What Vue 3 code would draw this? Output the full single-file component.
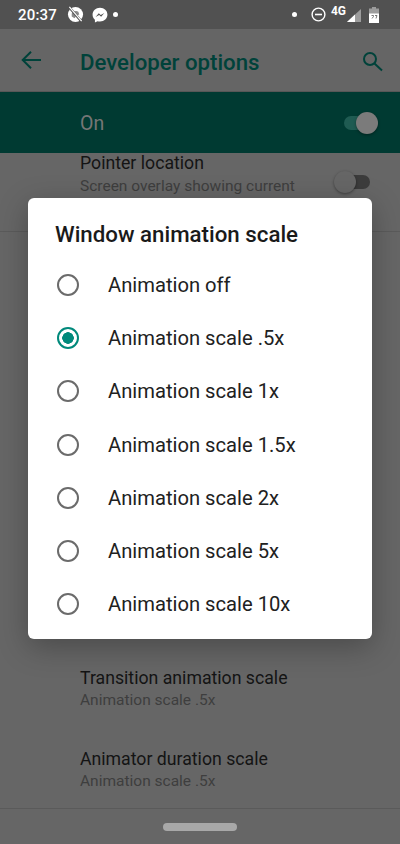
<script setup>
const options = ['Animation off', 'Animation scale .5x', 'Animation scale 1x', 'Animation scale 1.5x', 'Animation scale 2x', 'Animation scale 5x', 'Animation scale 10x']
const selected = 1
</script>

<template>
  <div class="screen">
    <div class="status">
      <div class="status-side">
        <span class="time">20:37</span>
        <svg class="ic" width="17" height="17" viewBox="0 0 18 18">
          <circle cx="9" cy="9" r="8" fill="#fff" />
          <path d="M5 8c2-3 5-3 7-2l1 3-3 1-2 3-3-2z" fill="#8a8a8a" />
          <path d="M2.500 1.500l13 15" stroke="#515151" stroke-width="2.600" />
          <path d="M2.500 1l13 15" stroke="#fff" stroke-width="1.300" />
        </svg>
        <svg class="ic msg" width="16" height="16" viewBox="0 0 17 17">
          <path d="M8.500.8C4 .8.600 4.100.600 8.200c0 2.200 1 4.100 2.500 5.400v3l2.800-1.500c.8.200 1.700.3 2.600.3 4.500 0 7.900-3.300 7.900-7.400S13 .8 8.500.8z" fill="#fff" />
          <path d="M3.800 10.600l3.400-4 2.100 2 3.800-2.200-3.400 4-2.100-2z" fill="#515151" />
        </svg>
        <span class="dot"></span>
      </div>
      <div class="status-side">
        <span class="dot right-dot"></span>
        <svg class="ic" width="15" height="15" viewBox="0 0 15 15">
          <circle cx="7.500" cy="7.500" r="6.400" fill="none" stroke="#fff" stroke-width="1.400" />
          <path d="M4 7.500h7" stroke="#fff" stroke-width="1.600" />
        </svg>
        <span class="net">4G</span>
        <svg class="signal" width="14" height="13" viewBox="0 0 14 13">
          <path d="M14 0v13H0z" fill="#9c9c9c" />
          <path d="M8 5.600V13H0z" fill="#fff" />
        </svg>
        <svg class="battery" width="10" height="16" viewBox="0 0 10 16">
          <path d="M3 0h4v1.500h3V16H0V1.500h3z" fill="#9c9c9c" />
          <path d="M0 6.500h10V16H0z" fill="#fff" />
          <path d="M2.500 8.500h2v1l-1.500 2M6 8.500h2l-1 3" stroke="#555" stroke-width=".8" fill="none" />
        </svg>
      </div>
    </div>

    <div class="toolbar">
      <svg class="back" width="24" height="24" viewBox="0 0 24 24">
        <path d="M21 12H3.500M11 3.700L2.700 12l8.300 8.300" fill="none" stroke="#00423a" stroke-width="2" />
      </svg>
      <span class="page-title">Developer options</span>
      <svg class="search" width="24" height="24" viewBox="0 0 24 24">
        <circle cx="9" cy="11" r="6" fill="none" stroke="#00423a" stroke-width="2" />
        <path d="M13.500 15.500L21 22.500" stroke="#00423a" stroke-width="2" />
      </svg>
    </div>

    <div class="master">
      <span class="master-label">On</span>
      <span class="switch on"><span class="thumb"></span></span>
    </div>

    <div class="list">
      <div class="row clipped">
        <div class="row-text">
          <div class="row-title">Pointer location</div>
          <div class="row-sub">Screen overlay showing current<br />touch data</div>
        </div>
        <span class="switch off"><span class="thumb"></span></span>
      </div>
      <div class="spacer"></div>
      <div class="row plain">
        <div class="row-title">Transition animation scale</div>
        <div class="row-sub">Animation scale .5x</div>
      </div>
      <div class="row plain">
        <div class="row-title">Animator duration scale</div>
        <div class="row-sub">Animation scale .5x</div>
      </div>
    </div>

    <div class="nav"><span class="pill"></span></div>

    <div class="dialog">
      <div class="dialog-title">Window animation scale</div>
      <div class="options">
        <div v-for="(option, i) in options" :key="option" class="option">
          <span class="radio" :class="{ checked: i === selected }"></span>
          <span class="option-label">{{ option }}</span>
        </div>
      </div>
    </div>
  </div>
</template>

<style scoped>
.screen {
  position: relative;
  width: 400px;
  height: 844px;
  overflow: hidden;
  display: flex;
  flex-direction: column;
  background: #666;
  font-family: Roboto, "Liberation Sans", sans-serif;
}
.status {
  height: 29px;
  flex: none;
  background: #515151;
  display: flex;
  justify-content: space-between;
  align-items: center;
  padding: 0 21px 0 18px;
  color: #fff;
}
.status-side {
  display: flex;
  align-items: center;
}
.time {
  font-size: 15px;
  font-weight: 500;
  letter-spacing: .2px;
  margin-right: 10px;
}
.msg {
  margin-left: 8px;
}
.dot {
  width: 5px;
  height: 5px;
  border-radius: 50%;
  background: #fff;
  margin-left: 5px;
}
.dot.right-dot {
  margin: 0 14px 0 0;
}
.net {
  font-size: 12px;
  font-weight: 700;
  margin: -7px 1px 0 5px;
}
.signal {
  margin-top: 2px;
}
.battery {
  margin-left: 8px;
}
.toolbar {
  height: 62px;
  flex: none;
  display: flex;
  align-items: center;
  padding: 0 15px 0 20px;
  background: #656565;
  border-bottom: 1px solid #575757;
}
.page-title {
  flex: 1;
  margin: 3px 0 0 36px;
  font-size: 22.200px;
  font-weight: 500;
  color: #00423a;
}
.master {
  height: 61px;
  flex: none;
  display: flex;
  align-items: center;
  justify-content: space-between;
  padding: 0 24px 0 80px;
  background: #003a32;
}
.master-label {
  font-size: 19.500px;
  margin-top: 2px;
  color: #767676;
}
.switch {
  position: relative;
  display: block;
  width: 32px;
  height: 14px;
  border-radius: 7px;
}
.switch.on {
  background: #1f5b52;
}
.switch.off {
  background: #3c3c3c;
}
.thumb {
  position: absolute;
  top: -4px;
  width: 22px;
  height: 22px;
  border-radius: 50%;
  box-shadow: 0 1px 3px rgba(0, 0, 0, .4);
}
.on .thumb {
  right: -2px;
  background: #7b7b7b;
}
.off .thumb {
  left: -4px;
  background: #666;
}
.list {
  flex: 1;
  display: flex;
  flex-direction: column;
}
.row {
  padding-left: 80px;
}
.clipped {
  height: 78px;
  flex: none;
  display: flex;
  justify-content: space-between;
  padding-right: 30px;
  border-bottom: 1px solid #5b5b5b;
  overflow: hidden;
}
.clipped .switch {
  margin-top: 22px;
}
.clipped .row-title {
  margin-top: 0;
}
.clipped .row-sub {
  margin-top: 3px;
}
.row-title {
  font-size: 17.700px;
  line-height: 20px;
  color: #141414;
  margin-top: -1px;
}
.row-sub {
  font-size: 15.500px;
  line-height: 20px;
  margin-top: 2px;
  color: #3e3e3e;
}
.spacer {
  flex: 1;
}
.plain {
  height: 81px;
  flex: none;
}
.plain:last-child {
  height: 58px;
}
.nav {
  height: 35px;
  flex: none;
  display: flex;
  justify-content: center;
  align-items: center;
  border-top: 1px solid #5a5a5a;
  background: #666;
}
.pill {
  width: 74px;
  height: 8px;
  border-radius: 4px;
  background: #a8a8a8;
}
.dialog {
  position: absolute;
  left: 28px;
  top: 198px;
  width: 344px;
  height: 441px;
  background: #fff;
  border-radius: 6px;
  box-shadow: 0 8px 30px rgba(0, 0, 0, .28);
}
.dialog-title {
  padding: 23px 0 0 27px;
  font-size: 22.300px;
  line-height: 26px;
  font-weight: 500;
  color: #1a1a1a;
}
.options {
  margin-top: 11px;
}
.option {
  height: 53.300px;
  display: flex;
  align-items: center;
  padding-left: 29px;
}
.radio {
  box-sizing: border-box;
  width: 22px;
  height: 22px;
  border-radius: 50%;
  border: 2px solid #6b6b6b;
  margin-right: 29px;
  flex: none;
}
.radio.checked {
  border-color: #00897b;
  background: radial-gradient(circle, #00897b 0 5.500px, #fff 6px);
}
.option-label {
  font-size: 20.200px;
  color: #212121;
}
</style>
